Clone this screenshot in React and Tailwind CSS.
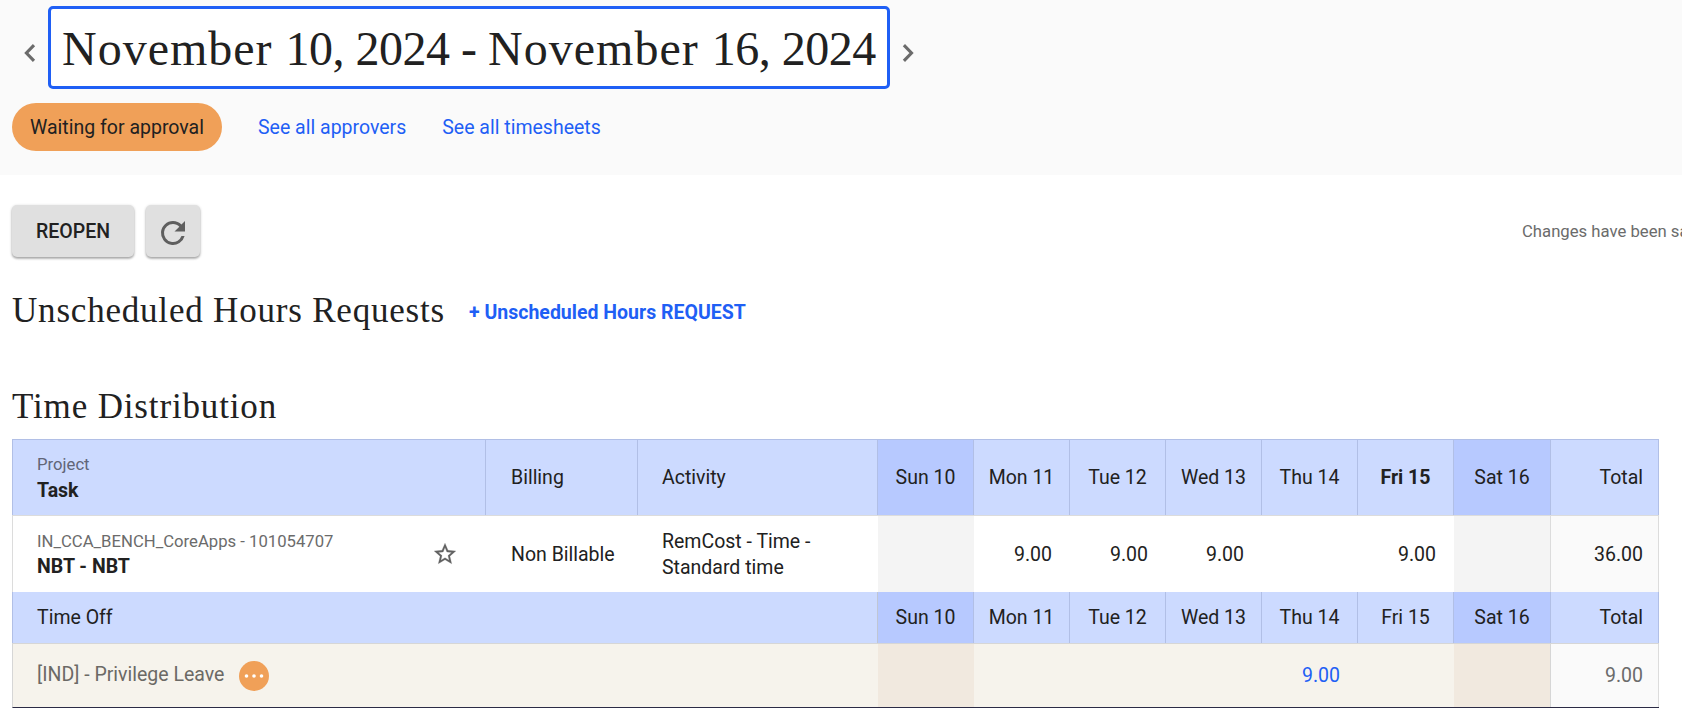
const days = ['Sun 10', 'Mon 11', 'Tue 12', 'Wed 13', 'Thu 14', 'Fri 15', 'Sat 16'];
const worked = ['', '9.00', '9.00', '9.00', '', '9.00', ''];
const off = ['', '', '', '', '9.00', '', ''];
const isWeekend = (i) => i === 0 || i === 6;

function DayHeaders({ boldToday }) {
  return days.map((d, i) => (
    <div
      key={d}
      className={`flex items-center justify-center border-r border-[#b1bfe6] ${isWeekend(i) ? 'bg-[#b7c9ff]' : ''} ${boldToday && i === 5 ? 'font-bold' : ''}`}
    >
      {d}
    </div>
  ));
}

const grid = 'grid grid-cols-[473px_152px_240px_repeat(6,96px)_97px_108px]';

export default function App() {
  return (
    <div className="h-[708px] w-[1682px] overflow-hidden bg-white font-['Roboto',sans-serif] text-[19.5px] leading-[26px] text-[#212121]">
      <header className="h-[175px] bg-[#fafafa] pt-[6px] pl-3">
        <div className="flex items-center">
          <svg className="mt-[11px] mr-[9px] ml-[9px] h-[20px] w-[18px]" viewBox="0 0 18 20" fill="none" stroke="#6b6b6b" strokeWidth="3.1">
            <path d="M13 2.2 5.4 10l7.6 7.8" />
          </svg>
          <h1 className="flex h-[83px] w-[842px] items-center rounded-[5px] border-[3px] border-[#1f5ff5] bg-white pt-[2px] pl-[11px] font-['Liberation_Serif',serif] text-[48px] whitespace-pre">
            <span className="tracking-[1px]">November </span>
            <span className="tracking-[-0.5px]">10, 2024 </span>
            <span className="tracking-[-0.5px]">- </span>
            <span className="tracking-[1px]">November </span>
            <span className="tracking-[-0.5px]">16, 2024</span>
          </h1>
          <svg className="mt-[11px] ml-[9px] h-[20px] w-[18px]" viewBox="0 0 18 20" fill="none" stroke="#6b6b6b" strokeWidth="3.1">
            <path d="M4.9 2.2 12.5 10l-7.6 7.8" />
          </svg>
        </div>
        <div className="mt-[14px] flex items-center gap-9">
          <div className="flex h-12 w-[210px] items-center justify-center rounded-full bg-[#f0a058] pt-[2px]">Waiting for approval</div>
          <a className="pt-[2px] text-[#1f5ff5]">See all approvers</a>
          <a className="pt-[2px] text-[#1f5ff5]">See all timesheets</a>
        </div>
      </header>

      <div className="mt-[30px] flex h-[52px] items-center pl-3">
        <button className="flex h-[52px] w-[122px] items-center justify-center rounded-[5px] bg-[#e0e0e0] pt-[2px] font-medium shadow-[0_1px_3px_rgba(0,0,0,0.3),0_2px_2px_rgba(0,0,0,0.15)]">
          REOPEN
        </button>
        <button className="ml-3 flex h-[52px] w-[54px] items-center justify-center rounded-[5px] bg-[#e0e0e0] shadow-[0_1px_3px_rgba(0,0,0,0.3),0_2px_2px_rgba(0,0,0,0.15)]">
          <svg className="mt-[4px] h-9 w-9" viewBox="0 0 24 24" fill="#5f5f5f">
            <path d="M17.65 6.35A7.96 7.96 0 0 0 12 4a8 8 0 1 0 7.73 10h-2.08A6 6 0 1 1 12 6c1.66 0 3.14.69 4.22 1.78L13 11h7V4l-2.35 2.35z" />
          </svg>
        </button>
        <div className="ml-auto w-[160px] pt-[2px] text-[16.7px] whitespace-nowrap text-[#6b6b6b]">Changes have been saved</div>
      </div>

      <div className="mt-[34px] flex h-[40px] items-center pl-3">
        <h2 className="w-[457px] font-['Liberation_Serif',serif] text-[35px] tracking-[0.8px] whitespace-nowrap">Unscheduled Hours Requests</h2>
        <a className="mt-1 font-bold text-[#1f5ff5]">+ Unscheduled Hours REQUEST</a>
      </div>
      <h2 className="mt-[56px] flex h-[40px] items-center pl-3 font-['Liberation_Serif',serif] text-[35px] tracking-[0.85px]">Time Distribution</h2>

      <div className="mt-[12px] ml-3 w-[1647px]">
        <div className={`${grid} h-[76px] border-t border-l border-[#b1bfe6] bg-[#ccdaff]`}>
          <div className="flex flex-col justify-center border-r border-[#b1bfe6] pl-6">
            <span className="text-[16.7px] text-[#616577]">Project</span>
            <span className="font-bold">Task</span>
          </div>
          <div className="flex items-center border-r border-[#b1bfe6] pl-[25px]">Billing</div>
          <div className="flex items-center border-r border-[#b1bfe6] pl-6">Activity</div>
          <DayHeaders boldToday />
          <div className="flex items-center justify-end border-r border-[#b1bfe6] pr-[15px]">Total</div>
        </div>

        <div className={`${grid} h-[77px] border-t border-l border-[#dcdcdc]`}>
          <div className="flex items-center justify-between pr-[28px] pl-6">
            <div className="flex flex-col">
              <span className="pt-px text-[16.7px] leading-[25px] text-[#6b6b6b]">IN_CCA_BENCH_CoreApps - 101054707</span>
              <span className="font-bold">NBT - NBT</span>
            </div>
            <svg className="h-[26px] w-[26px]" viewBox="0 0 24 24" fill="#616161" stroke="#616161" strokeWidth="0.2">
              <path d="M22 9.24l-7.19-.62L12 2 9.19 8.63 2 9.24l5.46 4.73L5.82 21 12 17.27 18.18 21l-1.63-7.03L22 9.24zM12 15.4l-3.76 2.27 1-4.28-3.32-2.88 4.38-.38L12 6.1l1.71 4.04 4.38.38-3.32 2.88 1 4.28L12 15.4z" />
            </svg>
          </div>
          <div className="flex items-center pt-[2px] pl-[25px]">Non Billable</div>
          <div className="flex items-center pt-[2px] pl-6">RemCost - Time -<br />Standard time</div>
          {worked.map((h, i) => (
            <div key={i} className={`flex items-center justify-end pt-[2px] pr-[18px] ${isWeekend(i) ? 'bg-[#f4f4f4]' : ''} ${i === 6 ? 'border-r border-[#dcdcdc]' : ''}`}>{h}</div>
          ))}
          <div className="flex items-center justify-end border-r border-[#dcdcdc] bg-[#fafafa] pt-[2px] pr-[15px]">36.00</div>
        </div>

        <div className={`${grid} h-[51px] border-l border-[#b1bfe6] bg-[#ccdaff]`}>
          <div className="col-span-3 flex items-center border-r border-[#c0c6d4] pl-6">Time Off</div>
          <DayHeaders />
          <div className="flex items-center justify-end border-r border-[#b1bfe6] pr-[15px]">Total</div>
        </div>

        <div className={`${grid} h-[65px] border-t border-b border-l border-t-[#d6d6d6] border-b-[#2b2b45] border-l-[#d6d6d6] bg-[#f6f3ec]`}>
          <div className="col-span-3 flex items-center pb-px pl-6 text-[#6b6965]">
            [IND] - Privilege Leave
            <svg className="mt-px ml-[15px] h-[30px] w-[30px]" viewBox="0 0 30 30">
              <circle cx="15" cy="15" r="15" fill="#f0a058" />
              <g fill="#fff">
                <circle cx="7.5" cy="15" r="1.8" />
                <circle cx="15" cy="15" r="1.8" />
                <circle cx="22.5" cy="15" r="1.8" />
              </g>
            </svg>
          </div>
          {off.map((h, i) => (
            <div key={i} className={`flex items-center justify-end pt-px pr-[18px] text-[#1f5ff5] ${isWeekend(i) ? 'bg-[#f1e9df]' : ''} ${i === 6 ? 'border-r border-[#d6d6d6]' : ''}`}>{h}</div>
          ))}
          <div className="flex items-center justify-end border-r border-[#dcdcdc] bg-[#fafafa] pt-px pr-[15px] text-[#6b6b6b]">9.00</div>
        </div>
      </div>
    </div>
  );
}
